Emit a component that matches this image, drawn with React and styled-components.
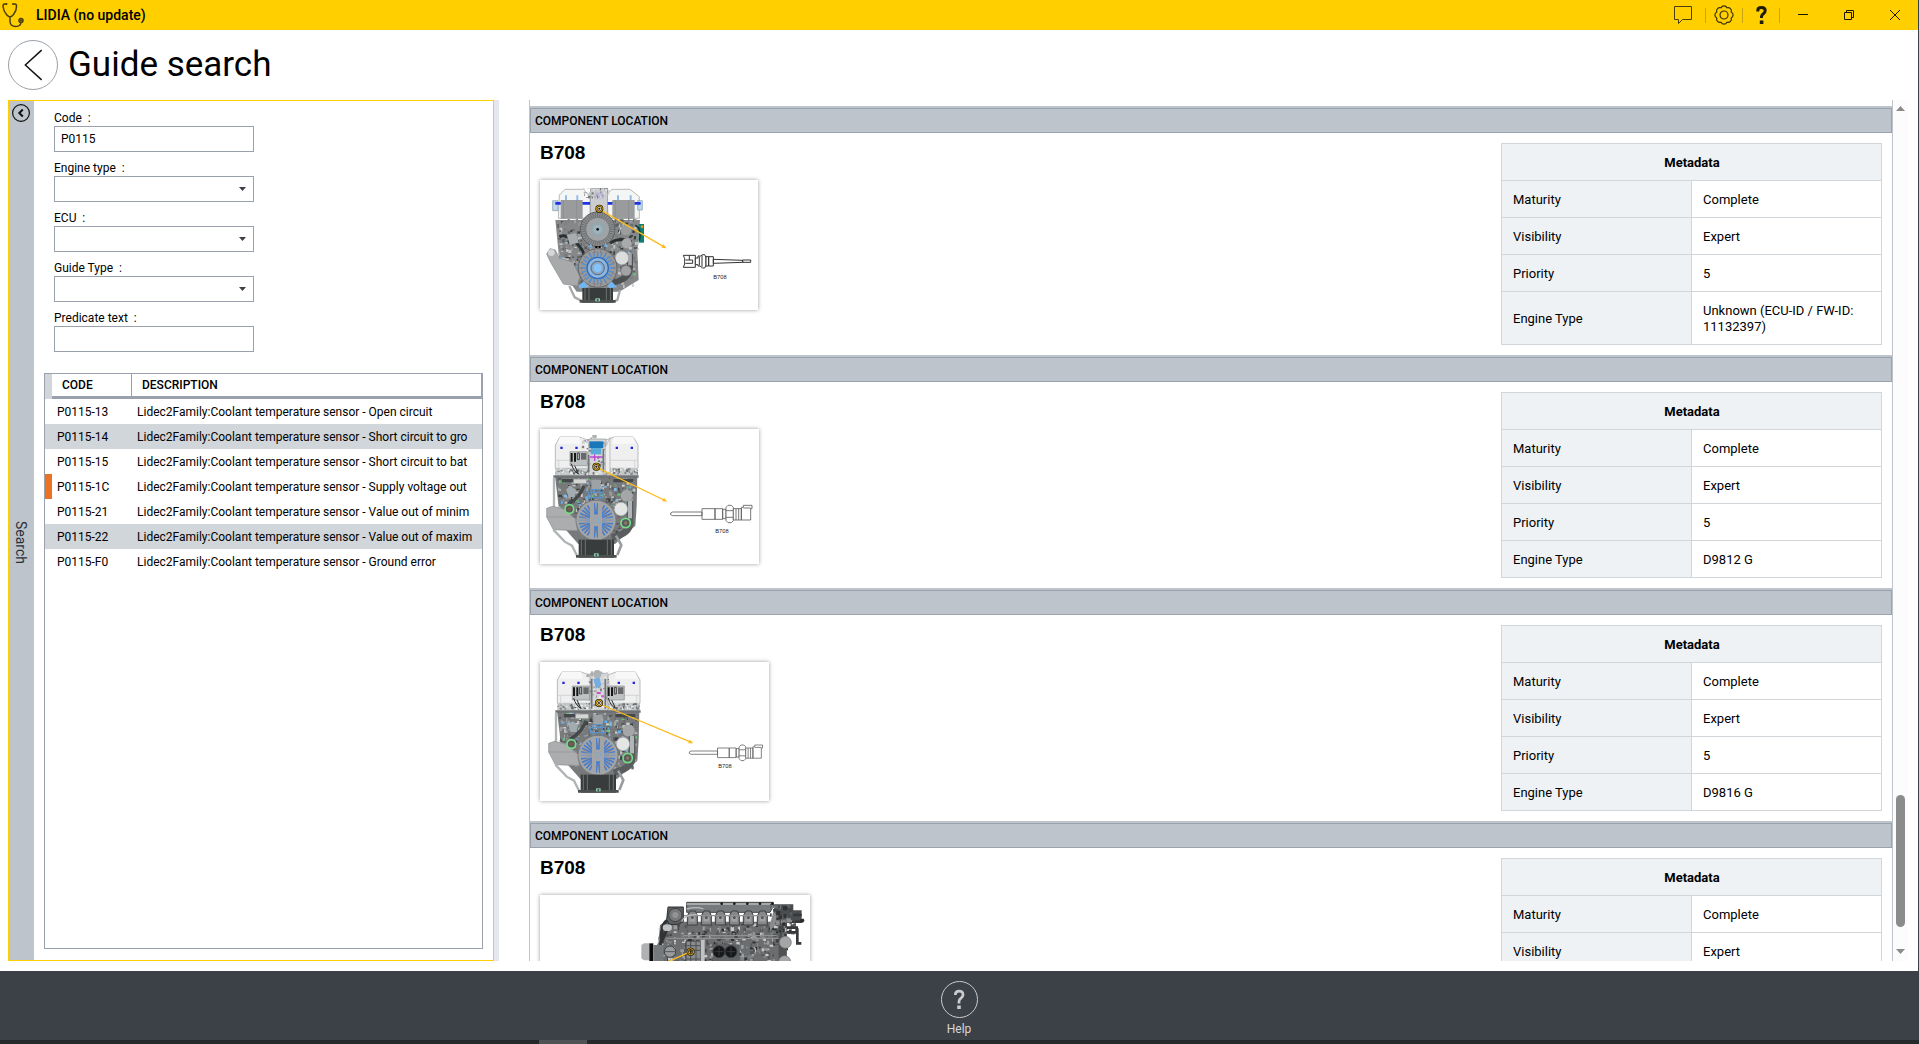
import styled, { createGlobalStyle } from "styled-components";

const GlobalStyle = createGlobalStyle`
  * {
    box-sizing: border-box;
  }
  body {
    margin: 0;
    overflow: hidden;
    font-family: Roboto, "Liberation Sans", sans-serif;
    font-size: 12px;
    color: #000;
  }
  button, input, select {
    font: inherit;
    color: inherit;
  }
`;

const Window = styled.div`
  display: flex;
  flex-direction: column;
  height: 100vh;
  background: #fff;
`;

const Frame = styled.div`
  flex: 1;
  min-height: 0;
  display: flex;
  flex-direction: column;
  border-right: 1px solid #3c4047;
`;

const TitleBar = styled.header`
  display: flex;
  align-items: center;
  height: 30px;
  flex-shrink: 0;
  padding-left: 2px;
  background: #ffcf00;
`;

const AppName = styled.span`
  flex: 1;
  padding-left: 10px;
  font-size: 14px;
  font-weight: 500;
  line-height: 30px;
`;

const BarButton = styled.button`
  display: flex;
  align-items: center;
  justify-content: center;
  width: ${(p) => p.$width}px;
  height: 30px;
  padding: 0;
  border: 0;
  background: none;
`;

const BarDivider = styled.span`
  width: 1px;
  height: 15px;
  background: #c9a411;
`;

const PageHead = styled.div`
  display: flex;
  align-items: center;
  gap: 10px;
  height: 70px;
  flex-shrink: 0;
  padding: 0 8px;
`;

const BackButton = styled.button`
  display: flex;
  align-items: center;
  justify-content: center;
  width: 50px;
  height: 50px;
  padding: 0;
  border: 1px solid #9aa0a8;
  border-radius: 50%;
  background: #fff;
`;

const PageTitle = styled.h1`
  margin: 0;
  font-size: 35px;
  font-weight: 400;
  line-height: 50px;
`;

const Body = styled.main`
  display: flex;
  flex: 1;
  min-height: 0;
  padding: 0 10px 10px 8px;
`;

const SearchPanel = styled.section`
  display: flex;
  width: 486px;
  flex-shrink: 0;
  border: 1px solid #ffcf00;
`;

const SearchStrip = styled.div`
  display: flex;
  flex-direction: column;
  align-items: center;
  gap: 4px;
  width: 25px;
  padding-top: 3px;
  border-right: 1px solid #ffcf00;
  background: #bdc4cc;
`;

const CollapseButton = styled.button`
  display: flex;
  padding: 0;
  border: 0;
  background: none;
`;

const StripLabel = styled.span`
  display: flex;
  flex: 1;
  align-items: center;
  justify-content: center;
  writing-mode: vertical-rl;
  font-size: 14px;
  color: #2a2f35;
`;

const SearchContent = styled.div`
  display: flex;
  flex: 1;
  min-width: 0;
  flex-direction: column;
  gap: 21px;
  padding: 9px 10px 11px;
`;

const Form = styled.form`
  display: flex;
  flex-direction: column;
  gap: 8px;
  width: 200px;
  margin-left: 10px;
`;

const Field = styled.div`
  display: flex;
  flex-direction: column;
`;

const FieldLabel = styled.label`
  height: 16px;
  line-height: 16px;
  white-space: pre;
`;

const TextInput = styled.input`
  height: 26px;
  padding: 0 6px;
  border: 1px solid #9ba1ac;
  border-radius: 0;
  background: #fff;
`;

const SelectBox = styled.div`
  position: relative;
  display: flex;
`;

const SelectInput = styled.select`
  flex: 1;
  height: 26px;
  padding: 0 20px 0 6px;
  border: 1px solid #9ba1ac;
  border-radius: 0;
  background: #fff;
  appearance: none;
`;

const SelectArrow = styled.svg`
  position: absolute;
  right: 8px;
  top: 11px;
  pointer-events: none;
`;

const ResultBox = styled.div`
  flex: 1;
  min-height: 0;
  border: 1px solid #9ba1ac;
`;

const ResultTable = styled.table`
  width: 100%;
  table-layout: fixed;
  border-spacing: 0;
  line-height: 16px;

  th, td {
    padding: 0;
    text-align: left;
  }
`;

const GutterHead = styled.th`
  width: 7px;
  background: #d1d6da;
`;

const ResultHead = styled.th`
  width: ${(p) => p.$width || "auto"};
  height: 25px;
  && {
    padding-left: 10px;
  }
  border-right: 1px solid #9ba1ac;
  border-bottom: 3px solid #9ba1ac;
  font-weight: 500;
`;

const ResultRow = styled.tr`
  height: 25px;
  background: ${(p) => (p.$shaded ? "#d1d6da" : "#fff")};
`;

const Marker = styled.td`
  background: ${(p) => (p.$active ? "#eb7125" : "transparent")};
`;

const CellText = styled.div`
  margin: 0 5px;
  overflow: hidden;
  white-space: nowrap;
`;

const Splitter = styled.div`
  width: 5px;
  margin-right: 30px;
  flex-shrink: 0;
  background: #e4e7ee;
`;

const Results = styled.section`
  flex: 1;
  min-width: 0;
  padding-top: 6px;
  overflow: hidden;
  border-left: 1px solid #bdc4cc;
  border-right: 1px solid #bdc4cc;
`;

const SectionTitle = styled.h2`
  height: 25px;
  margin: 0;
  padding-left: 4px;
  border: 1px solid #9aa3ad;
  background: #bdc4cc;
  font-size: 12px;
  font-weight: 500;
  line-height: 24px;
`;

const Section = styled.article`
  border-top: 2px solid #bdc4cc;
`;

const SectionBody = styled.div`
  display: flex;
  justify-content: space-between;
  align-items: flex-start;
  padding: 10px;
`;

const ComponentName = styled.h3`
  margin: 0 0 17px;
  font-family: "Liberation Sans", sans-serif;
  font-size: 19px;
  font-weight: 700;
  line-height: 20px;
`;

const Picture = styled.figure`
  display: flex;
  margin: 0;
  width: fit-content;
  background: #fff;
  box-shadow: 0 0 4px rgba(0, 0, 0, 0.4);
`;

const MetaTable = styled.table`
  width: 381px;
  flex-shrink: 0;
  table-layout: fixed;
  border-collapse: collapse;
  font-size: 13px;
  line-height: 16px;

  th, td {
    padding: 11px 10px 9px 11px;
    border: 1px solid #d1d6da;
    text-align: left;
    font-weight: 400;
  }
  th {
    background: #eef2f5;
  }
  thead th {
    text-align: center;
    font-weight: 700;
  }
`;

const ScrollTrack = styled.div`
  display: flex;
  flex-direction: column;
  align-items: center;
  width: 15px;
  padding: 6px 0 7px;
  background: #fcfcfc;
`;

const ScrollSpace = styled.div`
  flex: ${(p) => p.$grow};
`;

const ScrollThumb = styled.div`
  width: 9px;
  flex: 132;
  border-radius: 5px;
  background: #8b8b8b;
`;

const Footer = styled.footer`
  display: flex;
  justify-content: center;
  height: 69px;
  flex-shrink: 0;
  background: #3c4047;
`;

const HelpButton = styled.button`
  display: flex;
  flex-direction: column;
  align-items: center;
  gap: 3px;
  padding: 10px 0 0;
  border: 0;
  background: none;
  && {
    color: #d5d7d9;
  }
  line-height: 16px;
`;

const TaskBar = styled.div`
  height: 4px;
  flex-shrink: 0;
  padding-left: 539px;
  background: #25292b;
`;

const TaskItem = styled.div`
  width: 48px;
  height: 4px;
  background: #505356;
`;

const rows = [
  { code: "P0115-13", text: "Open circuit" },
  { code: "P0115-14", text: "Short circuit to gro", shaded: true },
  { code: "P0115-15", text: "Short circuit to bat" },
  { code: "P0115-1C", text: "Supply voltage out", active: true },
  { code: "P0115-21", text: "Value out of minim" },
  { code: "P0115-22", text: "Value out of maxim", shaded: true },
  { code: "P0115-F0", text: "Ground error" },
];

// small seeded scatter, used for bolts, pipes and castings on the engines
function scatter(seed, count, x, y, w, h, colors, size) {
  let s = seed;
  const next = () => {
    s = (s * 16807) % 2147483647;
    return s / 2147483647;
  };
  return Array.from({ length: count }, () => ({
    x: Math.round(x + next() * w),
    y: Math.round(y + next() * h),
    w: Math.round(2 + next() * size),
    h: Math.round(2 + next() * size),
    fill: colors[Math.floor(next() * colors.length)],
  }));
}

const Parts = ({ seed, count, x, y, w, h, colors, size = 9 }) =>
  scatter(seed, count, x, y, w, h, colors, size).map((p, i) => (
    <rect key={i} x={p.x} y={p.y} width={p.w} height={p.h} fill={p.fill} />
  ));

const greys = ["#5b5f60", "#77797b", "#9a9c9d", "#3d4041", "#7e8183", "#bfc1c2"];
const tints = ["#86b8e8", "#66aeea", "#65c476", "#cfd2d4"];

const Spokes = ({ cx, cy, r1, r2, count, color, width }) =>
  Array.from({ length: count }, (_, i) => {
    const a = (i * 2 * Math.PI) / count;
    return (
      <line
        key={i}
        x1={cx + r1 * Math.cos(a)}
        y1={cy + r1 * Math.sin(a)}
        x2={cx + r2 * Math.cos(a)}
        y2={cy + r2 * Math.sin(a)}
        stroke={color}
        strokeWidth={width}
      />
    );
  });

const Target = ({ x, y }) => (
  <g>
    <circle cx={x} cy={y} r="9" fill="none" stroke="#1d1800" strokeWidth="6" />
    <circle cx={x} cy={y} r="9" fill="none" stroke="#e0a810" strokeWidth="3" />
    <circle cx={x} cy={y} r="3" fill="#2b2300" />
  </g>
);

const Pointer = ({ x1, y1, x2, y2 }) => {
  const a = (Math.atan2(y2 - y1, x2 - x1) * 180) / Math.PI;
  return (
    <g>
      <line x1={x1} y1={y1} x2={x2} y2={y2} stroke="#fdbc1c" strokeWidth="4" />
      <path
        d="M4 0L-10 -6V6Z"
        fill="#fdbc1c"
        transform={`translate(${x2} ${y2}) rotate(${a})`}
      />
    </g>
  );
};

const PartLabel = ({ x, y }) => (
  <text x={x} y={y} fontSize="17" fontFamily="Liberation Sans, sans-serif" fill="#222">
    B708
  </text>
);

const Sump = ({ x, y, w, h }) => (
  <g>
    <rect x={x} y={y} width={w} height={h} fill="#393c3c" />
    <path
      d={`M${x + 8} ${y}V${y + h}M${x + 20} ${y}V${y + h - 5}M${x + w - 20} ${y}V${y + h - 5}M${x + w - 8} ${y}V${y + h}`}
      stroke="#6d7271"
      strokeWidth="3"
    />
    <path d={`M${x - 8} ${y + h - 8}H${x + w + 8}V${y + h}H${x - 8}Z`} fill="#4c504f" />
    <rect x={x + w / 2 - 7} y={y + h - 13} width="14" height="9" fill="#8fd0b0" />
    <circle cx={x + w / 2} cy={y + h - 8} r="3" fill="#3c4846" />
  </g>
);

const EngineUnknown = () => (
  <svg width="218" height="130" viewBox="0 0 654 390" role="img" aria-label="B708 front view">
    <path d="M58 45L75 28H130L150 50V115H55Z" fill="#f4f5f5" stroke="#b6babc" strokeWidth="3" />
    <path d="M200 45L215 28H270L298 50V115H205Z" fill="#f4f5f5" stroke="#b6babc" strokeWidth="3" />
    <path d="M38 62H54V92H38ZM293 62H307V90H293Z" fill="#bfd8ee" stroke="#7f97a8" strokeWidth="2" />
    <path d="M46 70H150M200 70H302" stroke="#1f32e6" strokeWidth="8" />
    <path d="M62 60H128V116H62ZM217 60H284V116H217Z" fill="#999b9c" />
    <path d="M70 60V116M226 60V116M110 60V116M266 60V116" stroke="#87898b" strokeWidth="2" />
    <path d="M78 46V60M112 46V60M234 46V60M272 46V60" stroke="#94bde4" strokeWidth="6" />
    <rect x="152" y="26" width="50" height="82" fill="#cbcdd0" stroke="#8e9296" strokeWidth="2" />
    <rect x="165" y="38" width="25" height="17" fill="#b4b1d8" />
    <Parts seed={31} count={45} x={130} y={22} w={75} h={30} colors={["#999", "#c5c8ca", "#777", "#e2e2e2"]} size={6} />
    <path d="M46 120H300L292 215L296 300L238 335H110L92 310L58 240Z" fill="#858789" />
    <Parts seed={77} count={320} x={52} y={115} w={236} h={130} colors={greys} />
    <Parts seed={78} count={140} x={90} y={240} w={190} h={75} colors={greys} />
    <Parts seed={12} count={45} x={60} y={120} w={220} h={190} colors={tints} size={7} />
    <path d="M58 170Q80 160 105 185T130 220M210 190Q230 175 260 180" fill="none" stroke="#2d3031" strokeWidth="9" />
    <path d="M80 165L108 160L116 188L90 194Z" fill="#a9abac" />
    <path d="M296 132H312V188H296Z" fill="#0d8073" />
    <path d="M286 136Q306 145 298 182" fill="none" stroke="#153b38" strokeWidth="5" />
    <circle cx="306" cy="140" r="4" fill="#ef9a1c" />
    <circle cx="173" cy="148" r="52" fill="#8b8d8e" stroke="#5b5e60" strokeWidth="3" />
    <Spokes cx={173} cy={148} r1={36} r2={51} count={40} color="#5e6163" width={2} />
    <circle cx="173" cy="148" r="36" fill="#a0a3a5" stroke="#66696b" strokeWidth="2" />
    <circle cx="173" cy="148" r="22" fill="#94a6ae" />
    <circle cx="173" cy="148" r="14" fill="#9fb3bc" />
    <circle cx="173" cy="148" r="4" fill="#111" />
    <circle cx="258" cy="150" r="16" fill="#9b9d9e" />
    <circle cx="260" cy="190" r="15" fill="#a9aaab" />
    <path d="M20 222L30 206L46 210L58 235L98 246L120 290L112 318L70 312L30 244Z" fill="#a7a9aa" stroke="#85888a" strokeWidth="2" />
    <circle cx="34" cy="218" r="10" fill="#d5d6d7" />
    <path d="M270 222V262Q270 300 210 310" fill="none" stroke="#4d5052" strokeWidth="18" />
    <path d="M270 220V256" stroke="#a4a7a9" strokeWidth="11" />
    <circle cx="246" cy="234" r="20" fill="#dcdddd" stroke="#a4a6a7" strokeWidth="2" />
    <circle cx="258" cy="272" r="16" fill="#a1a3a4" stroke="#66696a" strokeWidth="2" />
    <circle cx="173" cy="264" r="58" fill="#97999a" stroke="#65686a" strokeWidth="3" />
    <Spokes cx={173} cy={264} r1={35} r2={50} count={24} color="#4c90db" width={4} />
    <Spokes cx={173} cy={264} r1={46} r2={54} count={18} color="#8a6250" width={2} />
    <circle cx="173" cy="264" r="32" fill="#91b4d8" stroke="#276ec5" strokeWidth="4" />
    <circle cx="173" cy="264" r="20" fill="#8fa8c1" stroke="#44698e" strokeWidth="3" />
    <circle cx="173" cy="264" r="12" fill="#86c3fb" />
    <path d="M152 192L158 202H146ZM196 190L206 200H192ZM116 316L132 304L146 320L118 326ZM202 318L214 304L232 322L208 324Z" fill="#72b6f1" />
    <path d="M166 198H172V204H166ZM176 198H182V204H176Z" fill="#000" />
    <path d="M88 318L104 352L132 366M240 330L232 360L215 366" fill="none" stroke="#a7aaad" strokeWidth="7" />
    <Sump x={127} y={324} w={92} h={44} />
    <Pointer x1={184} y1={91} x2={376} y2={203} />
    <Target x={178} y={86} />
    <g fill="#fff" stroke="#333" strokeWidth="3">
      <path d="M430 226H466V262H430L434 252V236Z" />
      <path d="M436 240H458V250H436M448 226V240" />
      <path d="M466 234H474V228H482L488 224H494L498 232V256L494 264H488L480 258H474V254H466Z" />
      <path d="M498 230H506V258H498ZM506 230H520V258H506ZM520 238L608 241V247L520 250ZM608 240H632V247H608Z" />
      <path d="M478 230V256M486 226V260" />
    </g>
    <PartLabel x={520} y={297} />
  </svg>
);

// shared lower half of the D98xx G gas engines
const GasBlock = ({ dx = 0, dy = 0, seed }) => (
  <g transform={`translate(${dx} ${dy})`}>
    <path d="M45 140H292L290 230L286 290L225 345H115L62 285Z" fill="#77797b" />
    <Parts seed={seed} count={260} x={52} y={142} w={228} h={100} colors={greys} />
    <Parts seed={seed + 3} count={110} x={95} y={240} w={180} h={75} colors={greys} />
    <Parts seed={seed + 9} count={75} x={56} y={145} w={222} h={110} colors={tints} size={8} />
    <path d="M40 139H296V146H40Z" fill="#6e7173" />
    <path d="M42 146V240L66 240" fill="none" stroke="#b3b6b8" strokeWidth="7" />
    <path d="M66 155H130M220 155H280M132 170Q120 205 85 225" fill="none" stroke="#45484a" strokeWidth="10" />
    <path d="M100 150H140V164H100Z" fill="#d5d7d7" stroke="#888" strokeWidth="2" />
    <path d="M154 152H182V182H154Z" fill="#9fa2a4" />
    <path d="M146 190H190V206H146ZM154 182H180V216H154Z" fill="none" stroke="#5a92c8" strokeWidth="4" />
    <path d="M78 180L92 172L108 182L104 204H86Z" fill="#a1abb0" />
    <circle cx="260" cy="200" r="18" fill="#a4a6a7" />
    <path d="M20 238L38 232L70 240L110 272L112 305L40 302L20 264Z" fill="#abadae" stroke="#8a8d8f" strokeWidth="2" />
    <path d="M20 264H104" stroke="#939697" strokeWidth="2" />
    <path d="M40 302L74 338L96 350L112 382" fill="none" stroke="#b1b4b6" strokeWidth="7" />
    <path d="M270 216V280Q270 315 215 325" fill="none" stroke="#5a5d5f" strokeWidth="20" />
    <path d="M270 216V268" stroke="#b2b5b7" strokeWidth="12" />
    <path d="M228 320L244 348L232 378" fill="none" stroke="#9a9d9f" strokeWidth="8" />
    <circle cx="243" cy="240" r="20" fill="#e4e5e5" stroke="#a8abac" strokeWidth="2" />
    <circle cx="88" cy="240" r="13" fill="#5a5b58" stroke="#77dc88" strokeWidth="5" />
    <circle cx="88" cy="240" r="5" fill="#7b5e46" />
    <circle cx="257" cy="282" r="14" fill="#5a5b58" stroke="#77dc88" strokeWidth="5" />
    <circle cx="257" cy="282" r="5" fill="#86796a" />
    <circle cx="168" cy="274" r="60" fill="#a2a4a5" stroke="#76797b" strokeWidth="3" />
    <Spokes cx={168} cy={274} r1={18} r2={52} count={30} color="#447ed0" width={5} />
    <Spokes cx={168} cy={274} r1={30} r2={44} count={18} color="#b17659" width={2} />
    <path d="M150 218V330H162V216ZM174 216V332H186V218Z" fill="#a2a4a5" />
    <path d="M110 266H226V282H110Z" fill="#a2a4a5" opacity="0.7" />
    <rect x="161" y="267" width="14" height="14" fill="none" stroke="#76a9df" strokeWidth="2" />
    <Sump x={116} y={332} w={106} h={54} />
  </g>
);

// flip mirrors the cover for the right-hand bank
const HeadCover = ({ x, y, flip }) => (
  <g transform={`translate(${flip ? x + 104 : x} ${y}) scale(${flip ? -1 : 1} 1)`}>
    <path d="M0 98V28L14 4H72L104 16V98Z" fill="#efefef" stroke="#b8bbbd" strokeWidth="3" />
    <path d="M2 74H102M10 74V96M96 74V96" stroke="#c6c9cb" strokeWidth="2" />
    <path d="M14 4H72L76 24H6Z" fill="#f8f8f8" />
    <path d="M15 33H22V40H15ZM60 33H67V40H60Z" fill="#1d23dc" />
    <path d="M0 98H104V118H0Z" fill="#c3c6c7" />
    <Parts seed={44 + x} count={40} x={0} y={97} w={98} h={16} colors={["#66696b", "#ececec", "#888b8d"]} size={6} />
  </g>
);

const ControlBox = ({ x, y }) => (
  <g transform={`translate(${x} ${y})`}>
    <path d="M0 0H52V42H0Z" fill="#bfc2c3" stroke="#888b8d" strokeWidth="2" />
    <path d="M2 4H8V30H2ZM12 4H18V30H12Z" fill="#161616" />
    <path d="M22 4H28V24H22Z" fill="none" stroke="#3d3f41" strokeWidth="3" />
    <rect x="33" y="4" width="16" height="20" fill="#67696b" />
    <path d="M4 36Q10 58 24 66M14 42L26 68" fill="none" stroke="#2d2f30" strokeWidth="3" />
  </g>
);

const PlugSensor = ({ x, y, scale = 1 }) => (
  <g transform={`translate(${x} ${y}) scale(${scale})`} fill="#fff" stroke="#5b5b5b" strokeWidth="2.500">
    <path d="M6 20H94V31H6L0 28V23ZM94 10H133V42H94ZM133 10H156V42H133ZM156 12H166V40H156Z" />
    <path d="M166 6L172 0H182L188 6V46L182 52H172L166 46ZM166 16H188M166 36H188" />
    <path d="M188 10H212V44H188ZM212 6H218V0H244V10H240V44H212ZM196 10V44M204 10V44" />
    <path d="M218 8H240" />
  </g>
);

const EngineD9812 = () => (
  <svg width="219" height="135" viewBox="0 0 657 405" role="img" aria-label="B708 D9812 G">
    <HeadCover x={46} y={20} />
    <HeadCover x={190} y={20} flip />
    <path d="M146 30H198V140H146Z" fill="#d3d5d6" stroke="#95989a" strokeWidth="2" />
    <Parts seed={17} count={60} x={125} y={24} w={70} h={110} colors={["#aaa", "#eee", "#777", "#ccd"]} size={7} />
    <path d="M148 37H190V57H148Z" fill="#1a78b8" />
    <path d="M152 57H184V76H152Z" fill="#5babd9" />
    <path d="M150 84H190M164 76V96" stroke="#bd46d2" strokeWidth="4" />
    <path d="M146 78V130M190 60V130" stroke="#717476" strokeWidth="5" />
    <path d="M157 18H170V28H157Z" fill="#aeb1b3" />
    <ControlBox x={90} y={68} />
    <path d="M196 55L210 26V132H196Z" fill="#eee" stroke="#aaa" strokeWidth="2" />
    <GasBlock seed={501} />
    <Pointer x1={176} y1={118} x2={378} y2={216} />
    <Target x={169} y={113} />
    <PlugSensor x={392} y={229} />
    <PartLabel x={526} y={312} />
  </svg>
);

const EngineD9816 = () => (
  <svg width="229" height="139" viewBox="0 0 687 417" role="img" aria-label="B708 D9816 G">
    <HeadCover x={52} y={26} />
    <HeadCover x={196} y={26} flip />
    <path d="M150 34H204V145H150Z" fill="#d3d5d6" stroke="#95989a" strokeWidth="2" />
    <Parts seed={91} count={70} x={138} y={26} w={68} h={112} colors={["#aaa", "#eee", "#777", "#ccd"]} size={7} />
    <path d="M160 52L178 44L184 70L168 80Z" fill="#74aee4" />
    <path d="M170 90H182V96H170ZM184 100H192V106H184Z" fill="#d24ccd" />
    <circle cx="172" cy="36" r="12" fill="#aeb1b4" />
    <path d="M155 50V140M196 50V140" stroke="#717476" strokeWidth="5" />
    <ControlBox x={97} y={72} />
    <ControlBox x={201} y={72} />
    <GasBlock seed={814} dx={6} dy={6} />
    <Pointer x1={186} y1={129} x2={456} y2={242} />
    <Target x={177} y={123} />
    <PlugSensor x={448} y={249} scale={0.9} />
    <PartLabel x={535} y={319} />
  </svg>
);

const EngineSide = () => (
  <svg width="270" height="160" viewBox="0 0 810 480" role="img" aria-label="B708 side view">
    <path d="M375 80H740V400H350V200L360 90Z" fill="#6b6d6f" />
    <path d="M440 22H700V34L690 52H440Z" fill="#777a7c" stroke="#424546" strokeWidth="3" />
    <path d="M440 24H700V30H440Z" fill="#a7a9aa" />
    <path d="M702 28H760V46H785V84H702Z" fill="#4b4e50" />
    <Parts seed={61} count={80} x={690} y={26} w={75} h={90} colors={["#303233", "#626567", "#898b8d", "#444748"]} size={12} />
    <Parts seed={205} count={720} x={352} y={86} w={385} h={220} colors={["#2e3032", "#55585a", "#808385", "#9b9d9e", "#6c6f71", "#3f4244", "#c6c8c9"]} size={10} />
    {[545, 583, 622, 660, 697].map((x) => (
      <circle key={x} cx={x} cy="26" r="4" fill="#18191a" />
    ))}
    {[442, 484, 526, 568, 610, 652].map((x) => (
      <g key={x}>
        <path d={`M${x} 62L${x + 8} 48H${x + 24}L${x + 30} 62V90H${x}Z`} fill="#858789" stroke="#3d3f40" strokeWidth="3" />
        <path d={`M${x + 6} 66H${x + 24}V80H${x + 6}Z`} fill="#a0a2a3" />
        <circle cx={x + 15} cy="68" r="4" fill="#4b4d4f" />
      </g>
    ))}
    <path d="M430 62H690M430 122H710M380 130H720" stroke="#8f9193" strokeWidth="4" />
    <path d="M384 36H430V80L414 88H388L380 74Z" fill="#5d6062" stroke="#2f3132" strokeWidth="3" />
    <circle cx="406" cy="60" r="20" fill="#767879" stroke="#3d3f41" strokeWidth="3" />
    <circle cx="406" cy="60" r="9" fill="#929496" />
    <path d="M382 76Q360 90 366 145M388 86L360 150" fill="none" stroke="#303334" strokeWidth="10" />
    <ellipse cx="382" cy="98" rx="14" ry="10" fill="#c1c2c3" />
    <path d="M425 80Q430 60 470 58M440 42Q470 34 490 42" fill="none" stroke="#bbbdbe" strokeWidth="4" />
    <path d="M304 150L312 145H328V196H312L304 190Z" fill="#b0b1b2" />
    <path d="M328 145H340V198H328Z" fill="#0c0c0c" />
    <path d="M340 150H370V215H340Z" fill="#777a7c" />
    <circle cx="390" cy="170" r="17" fill="#999b9d" stroke="#404345" strokeWidth="3" />
    <path d="M373 170H407" stroke="#555859" strokeWidth="3" />
    <path d="M438 138H482V215H438Z" fill="#898b8d" stroke="#333536" strokeWidth="3" />
    <path d="M482 134H494V215H482Z" fill="#c0c2c3" />
    <path d="M440 152H480M440 166H480M440 192H480M452 138V215M468 138V215" stroke="#4c4f51" strokeWidth="3" />
    <path d="M518 148H598V215H518Z" fill="#606365" />
    <circle cx="537" cy="170" r="18" fill="#161718" stroke="#3c3e40" strokeWidth="3" />
    <circle cx="573" cy="170" r="18" fill="#161718" stroke="#3c3e40" strokeWidth="3" />
    <path d="M524 170H550M560 170H586M537 157V183M573 157V183" stroke="#47494a" strokeWidth="2" />
    <path d="M700 50Q715 60 706 86L690 110V86Z" fill="#898b8d" />
    <path d="M760 60H785M765 80H780L792 74M740 98H770V112H740M772 100V145H784" fill="none" stroke="#363839" strokeWidth="8" />
    <circle cx="786" cy="77" r="6" fill="#292b2c" />
    <path d="M716 120L740 126V200H716Z" fill="#4f5153" />
    <circle cx="736" cy="142" r="18" fill="#a3a5a6" stroke="#707274" strokeWidth="2" />
    <circle cx="734" cy="200" r="18" fill="#a3a5a6" stroke="#707274" strokeWidth="2" />
    <Pointer x1={452} y1={170} x2={260} y2={255} />
    <Target x={452} y={170} />
  </svg>
);

const sections = [
  { engine: "Unknown (ECU-ID / FW-ID: 11132397)", Drawing: EngineUnknown },
  { engine: "D9812 G", Drawing: EngineD9812 },
  { engine: "D9816 G", Drawing: EngineD9816 },
  { engine: "D9816 G", Drawing: EngineSide },
];

const StethoscopeIcon = () => (
  <svg width="24" height="26" viewBox="0 0 24 26" fill="none" stroke="#4a3f0d" strokeWidth="1.5">
    <path d="M4 2H2.500Q1 2 1 4.500Q1.500 9 4.500 12.500Q6 14.500 8 15Q10 14.500 11.500 12.500Q14.500 9 14.500 4.500Q14.500 2 13 2H11.500M8 15V19.500Q8.500 24.500 13.500 24.500Q18.500 24.500 19 20.500" />
    <circle cx="19" cy="18.500" r="2" />
    <circle cx="19" cy="18.500" r="0.500" />
    <path d="M4.500 1V3M11 1V3" />
  </svg>
);

// ring of eight shallow lobes
const gearPath = () => {
  const n = 8;
  let d = "";
  for (let i = 0; i <= n; i += 1) {
    const a = ((i - 0.5) * 2 * Math.PI) / n;
    const x = (10 + 7.8 * Math.cos(a)).toFixed(2);
    const y = (10 + 7.8 * Math.sin(a)).toFixed(2);
    d += i === 0 ? `M${x} ${y}` : `A3.300 3.300 0 0 1 ${x} ${y}`;
  }
  return `${d}Z`;
};

const GearIcon = () => (
  <svg width="20" height="20" viewBox="0 0 20 20" fill="none" stroke="#3a310a" strokeWidth="1.2">
    <path d={gearPath()} />
    <circle cx="10" cy="10" r="4" />
  </svg>
);

const QuestionIcon = ({ height, color }) => (
  <svg width={(height * 11) / 18} height={height} viewBox="0 0 11 18" fill="none">
    <path d="M1.800 5.500V4.500Q1.800 1.600 5.500 1.600T9.200 4.600Q9.200 6.500 7.400 7.700Q5.500 9 5.500 10.500V12" stroke={color} strokeWidth="3" />
    <rect x="3.800" y="14.500" width="3.600" height="3.500" fill={color} />
  </svg>
);

const SelectField = ({ id, label }) => (
  <Field>
    <FieldLabel htmlFor={id}>{`${label}  :`}</FieldLabel>
    <SelectBox>
      <SelectInput id={id} defaultValue="">
        <option value=""></option>
      </SelectInput>
      <SelectArrow width="7" height="4" viewBox="0 0 7 4">
        <path d="M0 0H7L3.500 4Z" fill="#3c4047" />
      </SelectArrow>
    </SelectBox>
  </Field>
);

const Metadata = ({ engine }) => (
  <MetaTable>
    <thead>
      <tr>
        <th colSpan={2}>Metadata</th>
      </tr>
    </thead>
    <tbody>
      {[
        ["Maturity", "Complete"],
        ["Visibility", "Expert"],
        ["Priority", "5"],
        ["Engine Type", engine],
      ].map(([name, value]) => (
        <tr key={name}>
          <th scope="row">{name}</th>
          <td>{value}</td>
        </tr>
      ))}
    </tbody>
  </MetaTable>
);

const App = () => {
  return (
    <Window>
      <GlobalStyle />
      <Frame>
        <TitleBar>
          <StethoscopeIcon />
          <AppName>LIDIA (no update)</AppName>
          <BarButton $width={44} aria-label="Feedback">
            <svg width="20" height="20" viewBox="0 0 20 20" fill="none" stroke="#4a3f0d">
              <path d="M1.500 1.500H18.500V14.500H9.500L5.500 18.500V14.500H1.500Z" />
            </svg>
          </BarButton>
          <BarDivider />
          <BarButton $width={36} aria-label="Settings">
            <GearIcon />
          </BarButton>
          <BarDivider />
          <BarButton $width={36} aria-label="Help topics">
            <QuestionIcon height={18} color="#1c1a08" />
          </BarButton>
          <BarDivider />
          <BarButton $width={46} aria-label="Minimize">
            <svg width="10" height="10" viewBox="0 0 10 10" stroke="#1a1600">
              <path d="M0 4.500H10" />
            </svg>
          </BarButton>
          <BarButton $width={46} aria-label="Restore">
            <svg width="10" height="10" viewBox="0 0 10 10" fill="none" stroke="#1a1600">
              <path d="M0.500 2.500H7.500V9.500H0.500ZM2.500 2.500V0.500H9.500V7.500H7.500" />
            </svg>
          </BarButton>
          <BarButton $width={46} aria-label="Close">
            <svg width="10" height="10" viewBox="0 0 10 10" stroke="#1a1600">
              <path d="M0 0L10 10M10 0L0 10" />
            </svg>
          </BarButton>
        </TitleBar>

        <PageHead>
          <BackButton aria-label="Back">
            <svg width="50" height="50" viewBox="0 0 50 50" fill="none" stroke="#111" strokeWidth="1.500">
              <path d="M34 9.500L17 25L34 40.500" />
            </svg>
          </BackButton>
          <PageTitle>Guide search</PageTitle>
        </PageHead>

        <Body>
          <SearchPanel>
            <SearchStrip>
              <CollapseButton aria-label="Collapse search">
                <svg width="18" height="18" viewBox="0 0 18 18" fill="none" stroke="#111">
                  <circle cx="9" cy="9" r="8.400" strokeWidth="1.200" />
                  <path d="M10.800 5.500L7.300 9L10.800 12.500" strokeWidth="2" />
                </svg>
              </CollapseButton>
              <StripLabel>Search</StripLabel>
            </SearchStrip>
            <SearchContent>
              <Form>
                <Field>
                  <FieldLabel htmlFor="code">{"Code  :"}</FieldLabel>
                  <TextInput id="code" defaultValue="P0115" />
                </Field>
                <SelectField id="engine" label="Engine type" />
                <SelectField id="ecu" label="ECU" />
                <SelectField id="guide" label="Guide Type" />
                <Field>
                  <FieldLabel htmlFor="predicate">{"Predicate text  :"}</FieldLabel>
                  <TextInput id="predicate" />
                </Field>
              </Form>
              <ResultBox>
                <ResultTable>
                  <thead>
                    <tr>
                      <GutterHead />
                      <ResultHead $width="80px">CODE</ResultHead>
                      <ResultHead>DESCRIPTION</ResultHead>
                    </tr>
                  </thead>
                  <tbody>
                    {rows.map((row) => (
                      <ResultRow key={row.code} $shaded={row.shaded}>
                        <Marker $active={row.active} />
                        <td>
                          <CellText>{row.code}</CellText>
                        </td>
                        <td>
                          <CellText>
                            Lidec2Family:Coolant temperature sensor - {row.text}
                          </CellText>
                        </td>
                      </ResultRow>
                    ))}
                  </tbody>
                </ResultTable>
              </ResultBox>
            </SearchContent>
          </SearchPanel>

          <Splitter />

          <Results>
            {sections.map(({ engine, Drawing }, i) => (
              <Section key={i}>
                <SectionTitle>COMPONENT LOCATION</SectionTitle>
                <SectionBody>
                  <div>
                    <ComponentName>B708</ComponentName>
                    <Picture>
                      <Drawing />
                    </Picture>
                  </div>
                  <Metadata engine={engine} />
                </SectionBody>
              </Section>
            ))}
          </Results>
          <ScrollTrack>
            <svg width="9" height="5" viewBox="0 0 9 5">
              <path d="M0 5L4.500 0L9 5Z" fill="#8b8b8b" />
            </svg>
            <ScrollSpace $grow={684} />
            <ScrollThumb />
            <ScrollSpace $grow={22} />
            <svg width="9" height="5" viewBox="0 0 9 5">
              <path d="M0 0L4.500 5L9 0Z" fill="#8b8b8b" />
            </svg>
          </ScrollTrack>
        </Body>

        <Footer>
          <HelpButton>
            <svg width="37" height="37" viewBox="0 0 37 37" fill="none">
              <circle cx="18.500" cy="18.500" r="18" stroke="#c8cacc" />
              <path d="M14.400 14V13.500Q14.400 10.200 18.200 10.200T22 13.700Q22 15.700 20 17.200Q18 18.700 18 20.500V22.500" stroke="#c8cacc" strokeWidth="2.800" />
              <rect x="16.200" y="24.500" width="3.600" height="3.500" fill="#c8cacc" />
            </svg>
            Help
          </HelpButton>
        </Footer>
      </Frame>
      <TaskBar>
        <TaskItem />
      </TaskBar>
    </Window>
  );
};

export default App;
